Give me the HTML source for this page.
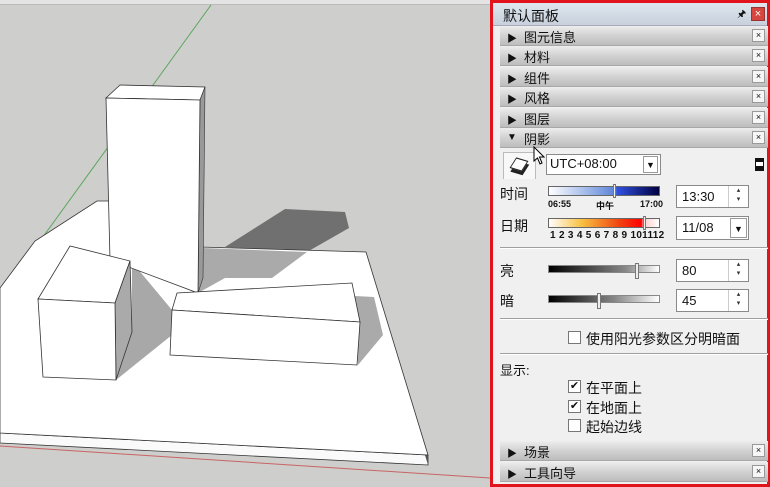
<!DOCTYPE html>
<html><head><meta charset="utf-8"><style>
*{margin:0;padding:0;box-sizing:border-box}
body{width:770px;height:487px;overflow:hidden;background:#cececc;position:relative;font-family:"Liberation Sans","Noto Sans CJK SC",sans-serif;font-size:13px;color:#111}
.a{position:absolute}
#panel{position:absolute;left:490px;top:0;width:280px;height:487px;border:3px solid #e0141a;background:#f0f0f0}
.hdr{position:absolute;left:7px;width:268px;height:20px;background:linear-gradient(#ededed,#d2d2d2 50%,#bdbdbd);border-bottom:1px solid #a8a8a8}
.hdr .ar{position:absolute;left:7px;top:4px;font-size:10px}
.hdr .t{position:absolute;left:24px;top:1px;font-size:13px}
.hdr .x{position:absolute;right:3px;top:3px;width:13px;height:13px;border:1px solid #999;background:#f6f6f6;font-size:9px;line-height:11px;text-align:center}
.box{position:absolute;background:#fff;border:1px solid #8a8a8a;font-size:13px;padding:3px 5px}
.spin{position:absolute;right:0;top:0;width:20px;height:100%;border-left:1px solid #ccc;font-size:7px;text-align:center;line-height:9px;color:#333}
.cb{position:absolute;width:13px;height:13px;border:1px solid #777;background:#fff;font-size:11px;line-height:11px;text-align:center}
.sep{position:absolute;left:7px;width:268px;height:2px;border-top:1px solid #a0a0a0;border-bottom:1px solid #fff}
</style></head><body>
<div class="a" style="left:0;top:0;width:490px;height:5px;background:#e4e4e4;border-bottom:1px solid #bbb"></div>
<svg class="a" style="left:0;top:0" width="490" height="487">
<line x1="211" y1="5" x2="40" y2="241" stroke="#5aa55a" stroke-width="1"/>
<line x1="0" y1="446" x2="490" y2="478" stroke="#c86464" stroke-width="1"/>
<polygon points="225,247 285,209 345,212 349,228 307,252" fill="#707070"/>
<polygon points="0,433 428,455 428,465 0,443" fill="#fafafa" stroke="#333" stroke-width="0.8"/>
<polygon points="366,252 428,455 428,465 365,256" fill="#555"/>
<polygon points="0,288 35,241 97,201 200,201 200,247 366,252 428,455 0,433" fill="#fff" stroke="#333" stroke-width="0.8"/>
<polygon points="203,248 307,252 272,278 203,278" fill="#aaa"/>
<polygon points="355,296 374,297 383,335 358,365" fill="#aaa"/>
<polygon points="132,262 172,310 172,335 116,380 132,332" fill="#a8a8a8"/>
<polygon points="198,278 225,278 198,293" fill="#aaa"/>
<polygon points="106,98 120,85 205,87 200,100" fill="#fff" stroke="#333" stroke-width="0.8"/>
<polygon points="200,100 205,87 203,278 198,293" fill="#999" stroke="#333" stroke-width="0.6"/>
<polygon points="106,98 200,100 198,293 110,260" fill="#fff" stroke="#333" stroke-width="0.8"/>
<polygon points="38,299 70,246 130,261 115,303" fill="#fff" stroke="#333" stroke-width="0.8"/>
<polygon points="115,303 130,261 132,332 116,380" fill="#aaa" stroke="#333" stroke-width="0.8"/>
<polygon points="38,299 115,303 116,380 43,377" fill="#fff" stroke="#333" stroke-width="0.8"/>
<polygon points="172,310 177,293 352,283 360,322" fill="#fff" stroke="#333" stroke-width="0.8"/>
<polygon points="172,310 360,322 357,365 170,355" fill="#fff" stroke="#333" stroke-width="0.8"/>
</svg>
<div id="panel">
<div class="a" style="left:0;top:0;width:274px;height:23px;background:linear-gradient(#dfe6ee,#c7d1dc);border-bottom:1px solid #aab"><span class="a" style="left:10px;top:3px;font-size:14px">默认面板</span><span class="a" style="left:244px;top:4px;font-size:10px">&#x1F588;</span><span class="a" style="left:258px;top:4px;width:14px;height:14px;background:#d6463e;color:#fff;font-size:11px;line-height:13px;text-align:center;border:1px solid #933">×</span></div>
<div class="hdr" style="top:23px"><span class="ar">▶</span><span class="t">图元信息</span><span class="x">×</span></div>
<div class="hdr" style="top:43px"><span class="ar">▶</span><span class="t">材料</span><span class="x">×</span></div>
<div class="hdr" style="top:64px"><span class="ar">▶</span><span class="t">组件</span><span class="x">×</span></div>
<div class="hdr" style="top:84px"><span class="ar">▶</span><span class="t">风格</span><span class="x">×</span></div>
<div class="hdr" style="top:105px"><span class="ar">▶</span><span class="t">图层</span><span class="x">×</span></div>
<div class="hdr" style="top:125px"><span class="ar">▼</span><span class="t">阴影</span><span class="x">×</span></div>
<div class="a" style="left:10px;top:149px;width:33px;height:27px;border:1px solid #bbb;border-bottom:none;background:#f8f8f8"><div class="a" style="left:8px;top:6px;width:14px;height:11px;border:1px solid #222;background:#fff;transform:skewX(-20deg) rotate(15deg);box-shadow:3px 3px 0 #222"></div></div>
<div class="box" style="left:53px;top:151px;width:115px;height:21px;padding:1px 3px">UTC+08:00<span class="a" style="right:2px;top:1px;width:15px;height:17px;border:1px solid #999;font-size:9px;text-align:center;line-height:17px">▼</span></div>
<div class="a" style="left:262px;top:155px;width:9px;height:13px;background:#111;border:1px solid #111"><div style="background:#fff;height:4px;margin-top:3px"></div></div>
<span class="a" style="left:7px;top:181px;font-size:14px">时间</span>
<div class="a" style="left:55px;top:183px;width:112px;height:10px;border:1px solid #666;background:linear-gradient(90deg,#fff,#5a84d8 60%,#3050e0 62%,#000040)"></div>
<div class="a" style="left:120px;top:181px;width:3px;height:14px;background:#eee;border:1px solid #777"></div>
<span class="a" style="left:55px;top:196px;font-size:9px;font-weight:bold">06:55</span><span class="a" style="left:103px;top:196px;font-size:9px;font-weight:bold">中午</span><span class="a" style="left:147px;top:196px;font-size:9px;font-weight:bold">17:00</span>
<div class="box" style="left:183px;top:182px;width:73px;height:23px">13:30<div class="spin">▴<br>▾</div></div>
<span class="a" style="left:7px;top:213px;font-size:14px">日期</span>
<div class="a" style="left:55px;top:215px;width:112px;height:10px;border:1px solid #666;background:linear-gradient(90deg,#fff,#f8c040 30%,#f04010 65%,#f00 84%,#fcc 86%,#fff)"></div>
<div class="a" style="left:150px;top:213px;width:3px;height:14px;background:#eee;border:1px solid #777"></div>
<span class="a" style="left:57px;top:227px;font-size:10px;font-weight:bold;letter-spacing:0.3px">1 2 3 4 5 6 7 8 9 101112</span>
<div class="box" style="left:183px;top:213px;width:73px;height:24px">11/08<span class="a" style="right:1px;top:1px;width:17px;height:20px;border:1px solid #999;font-size:9px;text-align:center;line-height:20px">▼</span></div>
<div class="sep" style="top:244px"></div>
<span class="a" style="left:7px;top:258px;font-size:14px">亮</span>
<div class="a" style="left:55px;top:262px;width:112px;height:8px;border:1px solid #888;background:linear-gradient(90deg,#000,#888 70%,#fff)"></div>
<div class="a" style="left:142px;top:260px;width:4px;height:16px;background:#eee;border:1px solid #777"></div>
<div class="box" style="left:183px;top:256px;width:73px;height:23px">80<div class="spin">▴<br>▾</div></div>
<span class="a" style="left:7px;top:288px;font-size:14px">暗</span>
<div class="a" style="left:55px;top:292px;width:112px;height:8px;border:1px solid #888;background:linear-gradient(90deg,#000,#888 60%,#fff)"></div>
<div class="a" style="left:104px;top:290px;width:4px;height:16px;background:#eee;border:1px solid #777"></div>
<div class="box" style="left:183px;top:286px;width:73px;height:23px">45<div class="spin">▴<br>▾</div></div>
<div class="sep" style="top:315px"></div>
<div class="cb" style="left:75px;top:328px"></div><span class="a" style="left:93px;top:326px;font-size:14px">使用阳光参数区分明暗面</span>
<div class="sep" style="top:350px"></div>
<span class="a" style="left:7px;top:357px;font-size:13px">显示:</span>
<div class="cb" style="left:75px;top:377px">✔</div><span class="a" style="left:93px;top:375px;font-size:14px">在平面上</span>
<div class="cb" style="left:75px;top:397px">✔</div><span class="a" style="left:93px;top:395px;font-size:14px">在地面上</span>
<div class="cb" style="left:75px;top:416px"></div><span class="a" style="left:93px;top:414px;font-size:14px">起始边线</span>
<div class="hdr" style="top:438px"><span class="ar">▶</span><span class="t">场景</span><span class="x">×</span></div>
<div class="hdr" style="top:459px"><span class="ar">▶</span><span class="t">工具向导</span><span class="x">×</span></div>
</div>
<svg class="a" style="left:533px;top:146px" width="14" height="20"><path d="M1 1 L1 15 L4.5 12 L7 18 L9 17 L6.5 11 L11 11 Z" fill="#fff" stroke="#000"/></svg>
</body></html>
